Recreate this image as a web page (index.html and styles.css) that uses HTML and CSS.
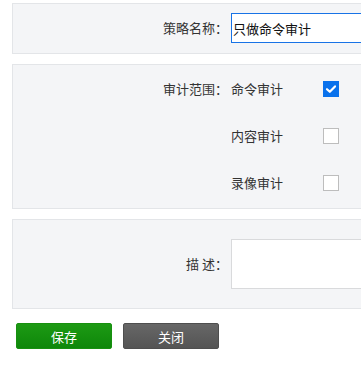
FILE: index.html
```html
<!DOCTYPE html>
<html lang="zh-CN">
<head>
<meta charset="utf-8">
<link rel="stylesheet" href="styles.css">
</head>
<body>
<div class="page">
  <div class="section sec-name">
    <div class="row">
      <label class="lbl">策略名称：</label>
      <input class="txt" type="text" value="只做命令审计">
    </div>
  </div>

  <div class="section sec-scope">
    <div class="row opt-row">
      <span class="lbl">审计范围：</span>
      <span class="opt">命令审计</span>
      <span class="cb checked"><svg viewBox="0 0 16 16" width="16" height="16"><path d="M4 8.2 L6.8 10.8 L12 5.4" fill="none" stroke="#fff" stroke-width="2.2" stroke-linecap="round" stroke-linejoin="round"/></svg></span>
    </div>
    <div class="row opt-row">
      <span class="lbl"></span>
      <span class="opt">内容审计</span>
      <span class="cb"></span>
    </div>
    <div class="row opt-row">
      <span class="lbl"></span>
      <span class="opt">录像审计</span>
      <span class="cb"></span>
    </div>
  </div>

  <div class="section sec-desc">
    <div class="row">
      <label class="lbl">描&nbsp;述：</label>
      <textarea class="area"></textarea>
    </div>
  </div>

  <div class="btns">
    <button class="btn save">保存</button>
    <button class="btn close">关闭</button>
  </div>
</div>
</body>
</html>
```

FILE: styles.css
```css
html, body {
  margin: 0;
  padding: 0;
  background: #fff;
  overflow: hidden;
}
body {
  font-family: "Noto Sans CJK SC", "Noto Sans", sans-serif;
  font-size: 13px;
  color: #333;
}
.page {
  padding: 3px 0 0 12px;
  width: 460px;
}
.section {
  background: #f4f5f7;
  border: 1px solid #e3e5e8;
  margin-bottom: 10px;
}
.row {
  display: flex;
  align-items: center;
}
.lbl {
  width: 215px;
  margin-right: 3px;
  text-align: right;
  flex: none;
  line-height: 16px;
}
.sec-name {
  padding: 9px 0 10px;
}
.txt {
  box-sizing: border-box;
  width: 220px;
  height: 30px;
  border: 1px solid #1873e6;
  background: #fff;
  padding: 0 1px;
  margin: 0;
  font-family: inherit;
  font-size: 13px;
  color: #111;
  outline: none;
}
.sec-scope {
  padding: 0 0 2px;
}
.opt-row {
  padding: 16px 0 15px;
}
.opt {
  width: 92px;
  flex: none;
  line-height: 16px;
}
.cb {
  box-sizing: border-box;
  width: 16px;
  height: 16px;
  border: 1px solid #bdbdbd;
  background: #fff;
  flex: none;
  display: block;
}
.cb.checked {
  background: #0a72ec;
  border-color: #0a72ec;
  position: relative;
}
.cb.checked svg {
  position: absolute;
  left: -1px;
  top: -1px;
}
.sec-desc {
  padding: 19px 0;
}
.area {
  box-sizing: border-box;
  width: 220px;
  height: 50px;
  border: 1px solid #d9dadc;
  background: #fff;
  margin: 0;
  padding: 2px;
  resize: none;
  display: block;
  font-family: inherit;
}
.btns {
  display: flex;
  gap: 11px;
  padding: 4px 0 0 4px;
}
.btn {
  box-sizing: border-box;
  width: 96px;
  height: 26px;
  border-radius: 2px;
  font-family: inherit;
  font-size: 13px;
  color: #fff;
  padding: 0;
  margin: 0;
  cursor: pointer;
}
.save {
  background: linear-gradient(#1d9a14, #0e870a);
  border: 1px solid #17900f;
}
.close {
  background: linear-gradient(#676767, #545454);
  border: 1px solid #4e4e4e;
}
```
